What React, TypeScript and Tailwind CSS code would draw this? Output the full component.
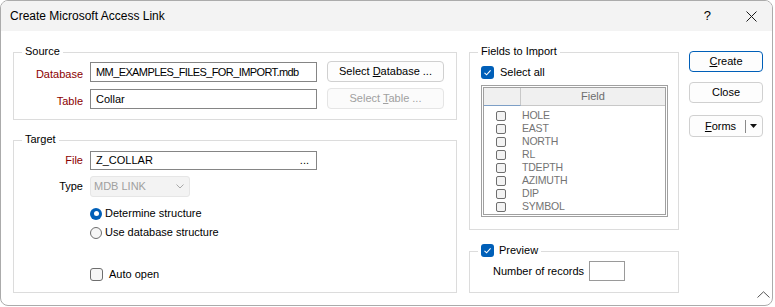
import type { ReactNode } from 'react';

function Group({ caption, className, children }: { caption: ReactNode; className?: string; children: ReactNode }) {
  return (
    <div className={`relative border border-[#dcdcdc] ${className ?? ''}`}>
      <div className="absolute -top-[10px] left-[8px] flex items-center bg-white px-[3px] leading-[16px]">{caption}</div>
      {children}
    </div>
  );
}

function CheckBox({ checked }: { checked?: boolean }) {
  if (checked) {
    return (
      <span className="flex h-[13px] w-[13px] items-center justify-center rounded-[3px] bg-[#005fb8]">
        <svg width="9" height="9" viewBox="0 0 9 9">
          <path d="M1.5 4.8 L3.6 6.8 L7.6 2.4" fill="none" stroke="white" strokeWidth="1.1" />
        </svg>
      </span>
    );
  }
  return <span className="block h-[13px] w-[13px] rounded-[3px] border border-[#6e6e6e] bg-[#f6f6f6]" />;
}

function Radio({ checked }: { checked?: boolean }) {
  if (checked) {
    return (
      <span className="flex h-[12px] w-[12px] items-center justify-center rounded-full bg-[#005fb8]">
        <span className="block h-[5px] w-[5px] rounded-full bg-white" />
      </span>
    );
  }
  return <span className="block h-[12px] w-[12px] rounded-full border border-[#6e6e6e] bg-[#f6f6f6]" />;
}

const fields = ['HOLE', 'EAST', 'NORTH', 'RL', 'TDEPTH', 'AZIMUTH', 'DIP', 'SYMBOL'];

export default function App() {
  return (
    <div className="h-[307px] w-[775px] bg-white font-['Liberation_Sans',Arial,sans-serif] text-[11px] text-black">
      <div className="relative flex h-[306px] w-[773px] flex-col overflow-hidden rounded-[8px] border border-[#ababab] bg-white">
        {/* title bar */}
        <div className="flex h-[30px] shrink-0 items-center bg-[#f3f3f3] pl-[9px] text-[12px]">
          <span>Create Microsoft Access Link</span>
          <span className="ml-auto mr-[35px] text-[13px]">?</span>
          <svg className="mr-[15px]" width="11" height="11" viewBox="0 0 11 11">
            <path d="M0.5 0.5 L10.5 10.5 M10.5 0.5 L0.5 10.5" stroke="#1a1a1a" strokeWidth="1" />
          </svg>
        </div>

        <div className="flex pl-[12px] pt-[21px]">
          {/* left column */}
          <div className="flex w-[444px] flex-col">
            <Group caption="Source" className="h-[68px] pt-[8px]">
              <div className="flex items-end">
                <span className="w-[69px] text-right text-[#8b0000]">Database</span>
                <div className="ml-[7px] flex h-[20px] w-[227px] items-center overflow-hidden whitespace-nowrap border border-[#858585] px-[5px] tracking-[-0.6px]">
                  MM_EXAMPLES_FILES_FOR_IMPORT.mdb
                </div>
                <button className="ml-[10px] h-[21px] w-[117px] rounded-[4px] border border-[#d0d0d0] bg-[#fdfdfd]">
                  Select <u>D</u>atabase ...
                </button>
              </div>
              <div className="mt-[6px] flex items-end">
                <span className="w-[69px] text-right text-[#8b0000]">Table</span>
                <div className="ml-[7px] flex h-[20px] w-[227px] items-center border border-[#858585] px-[5px]">Collar</div>
                <button className="ml-[10px] h-[21px] w-[117px] rounded-[4px] border border-[#e5e5e5] bg-[#fbfbfb] text-[#a0a0a0]">
                  Select <u>T</u>able ...
                </button>
              </div>
            </Group>

            <Group caption="Target" className="mt-[20px] h-[153px] pt-[10px]">
              <div className="flex items-center">
                <span className="w-[69px] text-right text-[#8b0000]">File</span>
                <div className="ml-[7px] flex h-[19px] w-[227px] items-center border border-[#858585] px-[5px]">
                  <span>Z_COLLAR</span>
                  <span className="ml-auto mr-[2px]">...</span>
                </div>
              </div>
              <div className="mt-[6px] flex items-center">
                <span className="w-[69px] text-right">Type</span>
                <div className="ml-[7px] flex h-[21px] w-[100px] items-center rounded-[3px] border border-[#e6e6e6] bg-[#f3f3f3] pl-[3px] text-[#a0a0a0]">
                  <span>MDB LINK</span>
                  <svg className="ml-auto mr-[5px]" width="8" height="5" viewBox="0 0 8 5">
                    <path d="M0.5 0.5 L4 4 L7.5 0.5" fill="none" stroke="#a8a8a8" strokeWidth="1" />
                  </svg>
                </div>
              </div>
              <div className="mt-[7px] flex h-[19px] items-center pl-[76px]">
                <Radio checked />
                <span className="ml-[3px]">Determine structure</span>
              </div>
              <div className="flex h-[19px] items-center pl-[76px]">
                <Radio />
                <span className="ml-[3px]">Use database structure</span>
              </div>
              <div className="mt-[23px] flex h-[19px] items-center pl-[76px]">
                <CheckBox />
                <span className="ml-[6px]">Auto open</span>
              </div>
            </Group>
          </div>

          {/* middle column */}
          <div className="ml-[12px] flex w-[210px] flex-col">
            <Group caption="Fields to Import" className="h-[178px] pt-[12px]">
              <div className="flex h-[15px] items-center pl-[11px]">
                <CheckBox checked />
                <span className="ml-[6px]">Select all</span>
              </div>
              <div className="ml-[11px] mt-[5px] h-[132px] w-[187px] border-[3px] border-double border-[#a0a0a0]">
                <div className="flex h-[18px] bg-[#f0f0f0] text-[#6d6d6d]">
                  <div className="w-[37px] border-b border-r border-b-[#7d9fc6] border-r-[#c8c8c8]" />
                  <div className="flex flex-1 items-center justify-center border-b border-[#c8c8c8]">Field</div>
                </div>
                <div className="pt-[3px]">
                  {fields.map((f) => (
                    <div key={f} className="flex h-[13px] items-center">
                      <span className="ml-[12px] block h-[10px] w-[10px] rounded-[2px] border border-[#6e6e6e] bg-[#f3f3f3]" />
                      <span className="ml-[16px] text-[10.5px] leading-[13px] tracking-[-0.2px] text-[#737373]">{f}</span>
                    </div>
                  ))}
                </div>
              </div>
            </Group>

            <Group
              caption={
                <>
                  <CheckBox checked />
                  <span className="ml-[5px]">Preview</span>
                </>
              }
              className="mt-[21px] h-[42px] pt-[9px]"
            >
              <div className="flex items-center pl-[23px]">
                <span className="w-[96px]">Number of records</span>
                <div className="h-[20px] w-[36px] border border-[#9a9a9a]" />
              </div>
            </Group>
          </div>

          {/* buttons */}
          <div className="-mt-[1px] ml-[10px] flex w-[74px] flex-col">
            <button className="h-[21px] rounded-[4px] border border-[#005fb8] bg-[#fdfdfd]">
              <u>C</u>reate
            </button>
            <button className="mt-[10px] h-[21px] rounded-[4px] border border-[#d0d0d0] bg-[#fdfdfd]">Close</button>
            <div className="mt-[12px] flex h-[22px] items-center rounded-[4px] border border-[#d0d0d0] bg-[#fdfdfd]">
              <span className="flex-1 pl-[6px] text-center">
                <u>F</u>orms
              </span>
              <span className="h-[13px] w-px bg-[#8a8a8a]" />
              <svg className="ml-[4px] mr-[5px]" width="7" height="4" viewBox="0 0 7 4">
                <path d="M0 0 L7 0 L3.5 4 Z" fill="#111" />
              </svg>
            </div>
          </div>
        </div>

        {/* resize grip */}
        <svg className="absolute bottom-[7px] right-[2px]" width="13" height="7" viewBox="0 0 13 7">
          <path d="M0.5 6.5 L6.5 0.8 L12.5 6.5" fill="none" stroke="#555" strokeWidth="1" />
        </svg>
      </div>
    </div>
  );
}
